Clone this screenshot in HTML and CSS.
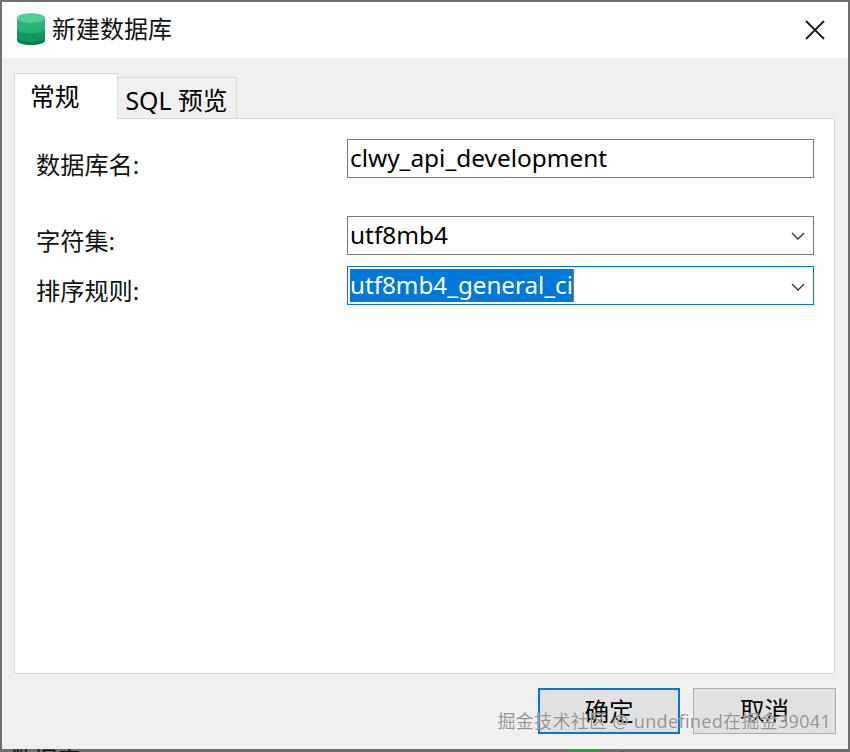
FILE: index.html
```html
<!DOCTYPE html>
<html lang="zh-CN">
<head>
<meta charset="utf-8">
<title>新建数据库</title>
<link rel="stylesheet" href="styles.css">
</head>
<body>
<div class="window">
  <header class="titlebar">
    <svg class="db-icon" width="28" height="32" viewBox="0 0 28 32">
      <defs>
        <linearGradient id="g1" x1="0" y1="0" x2="0" y2="1"><stop offset="0" stop-color="#2fbd80"/><stop offset="1" stop-color="#27ab72"/></linearGradient>
      </defs>
      <path d="M0 22v5.500C0 30 6 32 14 32s14-2 14-4.500V22z" fill="#06804f"/>
      <path d="M0 14v10c0 2.500 6 4.500 14 4.500S28 26.500 28 24V14z" fill="#0f9560"/>
      <path d="M0 5v11c0 2.500 6 4.500 14 4.500S28 18.500 28 16V5z" fill="url(#g1)"/>
      <ellipse cx="14" cy="5" rx="14" ry="4.800" fill="#4fcf95"/>
    </svg>
    <span class="title">新建数据库</span>
    <svg class="close" width="20" height="20" viewBox="0 0 20 20"><path d="M1 1l18 18M19 1L1 19" stroke="#1a1a1a" stroke-width="1.800" fill="none"/></svg>
  </header>
  <main class="content">
    <nav class="tabs">
      <div class="tab active">常规</div>
      <div class="tab">SQL 预览</div>
    </nav>
    <section class="pane">
      <div class="row row-name">
        <label class="label">数据库名:</label>
        <div class="field">clwy_api_development</div>
      </div>
      <div class="row row-charset">
        <label class="label">字符集:</label>
        <div class="field">utf8mb4
          <svg class="chevron" width="14" height="8" viewBox="0 0 14 8"><path d="M1 1l6 6 6-6" stroke="#333" stroke-width="1.300" fill="none"/></svg>
        </div>
      </div>
      <div class="row row-collation">
        <label class="label">排序规则:</label>
        <div class="field focused"><span class="selection">utf8mb4_general_ci</span>
          <svg class="chevron" width="14" height="8" viewBox="0 0 14 8"><path d="M1 1l6 6 6-6" stroke="#333" stroke-width="1.300" fill="none"/></svg>
        </div>
      </div>
    </section>
    <footer class="actions">
      <button class="btn primary">确定</button>
      <button class="btn">取消</button>
    </footer>
  </main>
  <div class="watermark">掘金技术社区 @ undefined在掘金39041</div>
  <div class="behind">
    <span class="behind-text">数据库</span>
    <span class="behind-icon"></span>
    <span class="behind-text">打开</span>
  </div>
</div>
</body>
</html>
```
FILE: styles.css
```css
* { box-sizing: border-box; }
html, body { margin: 0; padding: 0; }
body {
  width: 850px;
  height: 752px;
  overflow: hidden;
  background: #6e6e6e;
  font-family: "Noto Sans", "Noto Sans CJK SC", sans-serif;
  color: #000;
}
.window {
  position: relative;
  width: 850px;
  height: 752px;
  padding: 2px 2px 3px 2px;
  display: flex;
  flex-direction: column;
}
.titlebar {
  height: 56px;
  flex: none;
  background: #fff;
  display: flex;
  align-items: center;
  padding: 0 24px 0 15px;
}
.db-icon { flex: none; margin-top: -2px; }
.title {
  margin-left: 7px;
  font-size: 24px;
  line-height: 32px;
  color: #111;
  font-family: "Noto Sans CJK SC", sans-serif;
  position: relative;
  top: -2px;
}
.close { margin-left: auto; margin-right: -1px; }
.content {
  flex: 1;
  background: #f0f0f0;
  padding: 15px 13px 0 12px;
  display: flex;
  flex-direction: column;
}
.tabs {
  display: flex;
  align-items: flex-end;
  height: 46px;
  margin-bottom: -1px;
  position: relative;
  z-index: 1;
}
.tab {
  height: 41px;
  margin-bottom: 1px;
  width: 119px;
  border: 1px solid #d9d9d9;
  border-left: 0;
  border-bottom: 0;
  font-size: 24.800px;
  line-height: 44px;
  text-align: center;
  background: #f0f0f0;
  padding-right: 1px;
}
.tab.active {
  width: 104px;
  height: 46px;
  margin-bottom: 0;
  background: #fff;
  border: 1px solid #d9d9d9;
  border-bottom: 0;
  text-align: left;
  padding: 0 0 0 15px;
  line-height: 44px;
}
.pane {
  height: 556px;
  flex: none;
  width: 821px;
  background: #fff;
  border: 1px solid #d9d9d9;
  padding: 20px 20px 0 21px;
  display: flex;
  flex-direction: column;
}
.row {
  display: flex;
  align-items: center;
  height: 39px;
}
.row-charset { margin-top: 38px; }
.row-collation { margin-top: 11px; }
.label {
  width: 311px;
  flex: none;
  font-size: 24.200px;
  line-height: 39px;
  color: #111;
  position: relative;
  top: 5px;
}
.row-name .label { top: 6px; }
.field {
  width: 467px;
  height: 39px;
  flex: none;
  border: 1px solid #7a7a7a;
  background: #fff;
  font-size: 24.400px;
  line-height: 33px;
  padding: 0 2px 2px;
  display: flex;
  align-items: center;
  justify-content: space-between;
  white-space: nowrap;
}
.field.focused { border-color: #0078d7; padding: 2px; }
.selection {
  background: #0078d7;
  color: #fff;
  height: 33px;
  font-size: 24.200px;
  line-height: 31px;
  border-right: 1px solid #777;
}
.chevron { margin-right: 6px; flex: none; margin-top: 2px; }
.actions {
  display: flex;
  justify-content: flex-end;
  gap: 13px;
  margin-top: 14px;
  margin-right: -1px;
}
.btn {
  width: 143px;
  height: 46px;
  background: #e1e1e1;
  border: 1px solid #adadad;
  font: inherit;
  font-size: 24.600px;
  line-height: 44px;
  color: #000;
  padding: 0 0 3px;
}
.btn.primary { width: 142px; border: 2px solid #0078d7; }
.watermark {
  position: absolute;
  right: 19px;
  top: 708px;
  font-size: 18px;
  line-height: 26px;
  letter-spacing: 0.3px;
  color: rgba(140,140,140,0.95);
  white-space: nowrap;
  text-shadow: 0 0 1px #fff;
}
.behind {
  position: absolute;
  left: 11px;
  right: 0;
  bottom: 0;
  height: 3px;
  overflow: hidden;
  display: flex;
}
.behind-text {
  flex: none;
  font-size: 23px;
  line-height: 26px;
  height: 26px;
  margin-top: -3px;
  color: #111;
}
.behind-text:last-child { margin-left: 18px; font-size: 16px; }
.behind-icon {
  flex: none;
  width: 31px;
  height: 3px;
  margin-left: 489px;
  background: #3f8f4c;
}
```
